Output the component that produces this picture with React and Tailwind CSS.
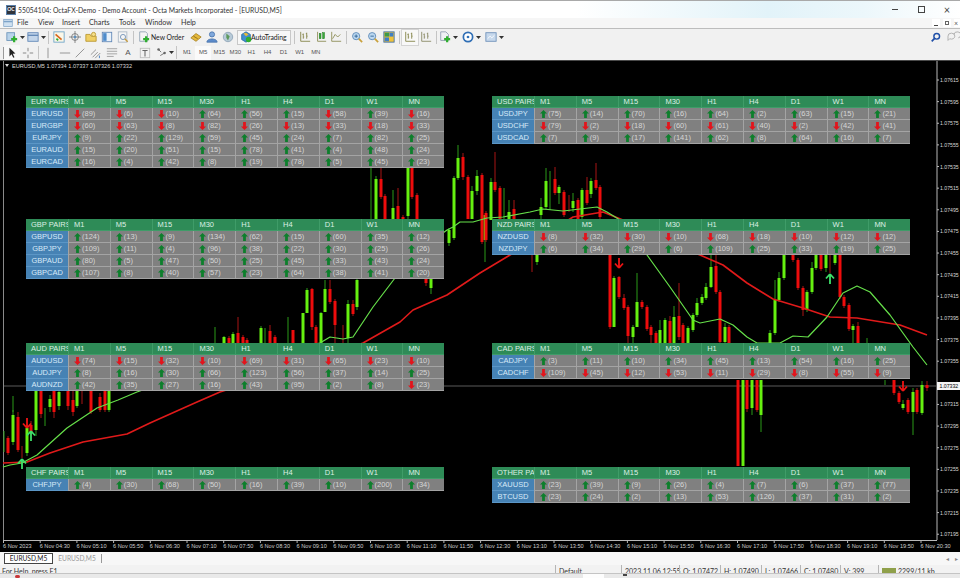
import React from "react";

const UI = "font-['Lato','Liberation_Sans',sans-serif]";

// [name, values] -- a negative value is a red down arrow
const panels = [
  { title: "EUR PAIRS", rows: [
    ["EURUSD", [-89, -6, -10, 64, 56, 15, -58, 39, -16]],
    ["EURGBP", [-60, -63, -8, -82, -26, -13, -33, -18, -33]],
    ["EURJPY", [9, 22, 129, 59, 45, 24, 7, 82, 25]],
    ["EURAUD", [15, 20, 51, 15, 78, 41, 4, 48, 24]],
    ["EURCAD", [16, 4, 42, 8, 19, 78, 5, 45, 23]],
  ] },
  { title: "USD PAIRS", rows: [
    ["USDJPY", [75, 14, 70, 16, 64, 2, 63, 15, 21]],
    ["USDCHF", [-79, -2, -18, -60, -61, -40, -2, -42, -41]],
    ["USDCAD", [7, 9, 17, 141, 62, 8, 64, 16, 7]],
  ] },
  { title: "GBP PAIRS", rows: [
    ["GBPUSD", [124, 13, 9, 134, 62, 15, 60, 35, 12]],
    ["GBPJPY", [109, 11, 4, 96, 38, 22, 30, 25, 26]],
    ["GBPAUD", [80, 5, 47, 50, 25, 45, 33, 43, 24]],
    ["GBPCAD", [107, 8, 40, 57, 23, 64, 38, 41, 20]],
  ] },
  { title: "NZD PAIRS", rows: [
    ["NZDUSD", [-8, -32, -30, -10, -68, -18, -10, -12, -12]],
    ["NZDJPY", [6, 34, 29, 6, 109, 25, 33, 19, 25]],
  ] },
  { title: "AUD PAIRS", rows: [
    ["AUDUSD", [-74, -15, -32, -10, -69, -31, -65, -23, -10]],
    ["AUDJPY", [8, 16, 30, 66, 123, 56, 37, 14, 25]],
    ["AUDNZD", [42, 35, 27, 16, 43, 95, 2, 8, -23]],
  ] },
  { title: "CAD PAIRS", rows: [
    ["CADJPY", [3, 11, 10, 34, 45, 13, 54, 16, 25]],
    ["CADCHF", [-109, -45, -12, -53, -11, -29, -8, -55, -9]],
  ] },
  { title: "CHF PAIRS", rows: [["CHFJPY", [4, 30, 68, 50, 16, 39, 10, 200, 34]]] },
  { title: "OTHER PAIRS", rows: [
    ["XAUUSD", [23, 39, 9, 26, 4, 7, 6, 37, 77]],
    ["BTCUSD", [23, 24, 2, 13, 53, 126, 37, 31, 2]],
  ] },
];

const timeframes = ["M1", "M5", "M15", "M30", "H1", "H4", "D1", "W1", "MN"];

// [x, body top, body bottom, wick top, wick bottom]
const green = [
  [13, 415, 442, 410, 445], [27, 428, 453, 425, 456], [36, 391, 430, 390, 436], [50, 399, 407, 395, 412],
  [59, 392, 406, 391, 410], [77, 391, 406, 391, 408], [109, 391, 410, 391, 412], [45, 410, 410, 408, 426],
  [13, 396, 396, 396, 412], [4, 431, 431, 431, 452],
  [215, 343, 343, 327, 343], [224, 337, 343, 336, 343], [233, 334, 343, 332, 343], [261, 328, 343, 326, 343],
  [265, 330, 330, 328, 343], [288, 343, 343, 317, 343], [303, 313, 343, 313, 343], [307, 290, 313, 288, 313],
  [321, 313, 343, 312, 343], [325, 289, 312, 280, 312], [348, 304, 338, 300, 343], [357, 280, 307, 279, 310],
  [376, 179, 219, 176, 219], [371, 170, 170, 168, 219], [393, 208, 219, 190, 219], [408, 167, 216, 167, 219],
  [454, 178, 238, 176, 240], [449, 230, 243, 228, 246], [458, 158, 178, 145, 180], [472, 191, 219, 186, 219],
  [477, 176, 191, 170, 195], [491, 182, 220, 178, 220], [485, 215, 240, 215, 262], [431, 278, 288, 278, 294],
  [504, 190, 190, 188, 219], [509, 212, 219, 200, 219], [541, 207, 215, 198, 219], [546, 181, 207, 168, 210],
  [550, 172, 172, 171, 210], [559, 187, 193, 185, 204], [573, 201, 208, 193, 212], [582, 190, 217, 188, 219],
  [591, 181, 194, 178, 198], [537, 255, 262, 255, 265],
  [614, 278, 327, 276, 327], [633, 327, 337, 325, 343], [637, 302, 327, 273, 327], [660, 330, 343, 320, 343],
  [665, 320, 343, 318, 343], [674, 317, 343, 306, 343], [688, 328, 343, 326, 343], [693, 315, 330, 313, 332],
  [697, 303, 315, 298, 317], [702, 297, 303, 294, 305], [706, 287, 298, 283, 300], [711, 267, 287, 255, 288],
  [725, 327, 342, 323, 343], [770, 333, 343, 330, 343], [775, 300, 333, 280, 335], [779, 278, 300, 272, 302],
  [784, 255, 278, 255, 280], [807, 292, 310, 290, 312], [812, 268, 292, 262, 294], [816, 255, 268, 255, 270],
  [826, 255, 268, 255, 272], [835, 255, 263, 255, 265], [853, 326, 330, 324, 343], [867, 343, 343, 338, 343],
  [743, 380, 466, 380, 466], [752, 380, 408, 380, 415], [761, 380, 415, 380, 432],
  [885, 380, 380, 380, 385], [903, 404, 408, 400, 410], [913, 392, 412, 388, 435], [922, 385, 413, 381, 415],
];
const red = [
  [18, 417, 450, 412, 452], [31, 425, 432, 421, 436], [22, 447, 447, 446, 458], [8, 438, 453, 436, 455],
  [41, 391, 414, 391, 418], [54, 391, 412, 391, 418], [68, 391, 406, 391, 410], [73, 400, 412, 391, 416],
  [91, 391, 412, 391, 414], [100, 397, 410, 393, 412], [105, 391, 410, 391, 412], [82, 391, 391, 391, 404],
  [229, 338, 343, 336, 343], [238, 333, 343, 317, 343], [243, 337, 343, 335, 343], [247, 340, 343, 338, 343],
  [270, 331, 343, 325, 343], [275, 337, 343, 335, 343], [293, 330, 343, 330, 343],
  [312, 289, 327, 288, 330], [316, 327, 343, 325, 343], [330, 289, 302, 280, 304], [335, 301, 325, 299, 343],
  [343, 325, 325, 325, 343], [353, 304, 314, 300, 316],
  [381, 179, 197, 168, 199], [385, 196, 219, 194, 219], [398, 206, 219, 188, 219], [403, 217, 219, 215, 219],
  [412, 167, 197, 167, 199], [417, 195, 219, 193, 219],
  [463, 157, 177, 153, 180], [468, 177, 219, 175, 219], [482, 175, 242, 173, 244], [486, 213, 240, 211, 242],
  [495, 182, 190, 152, 192], [500, 188, 220, 186, 220], [514, 209, 219, 200, 219], [555, 179, 193, 167, 195],
  [564, 192, 215, 190, 217], [569, 197, 197, 195, 212], [578, 200, 219, 198, 219], [587, 190, 203, 177, 205],
  [596, 180, 188, 163, 190], [600, 187, 217, 185, 219], [426, 278, 283, 278, 286], [532, 255, 255, 255, 272],
  [610, 255, 327, 255, 329], [619, 277, 297, 276, 299], [624, 298, 308, 294, 310], [628, 307, 336, 305, 343],
  [642, 302, 307, 300, 309], [647, 307, 329, 305, 331], [651, 327, 335, 325, 343], [656, 333, 343, 331, 343],
  [670, 321, 343, 316, 343], [679, 316, 337, 283, 340], [683, 325, 343, 323, 343], [716, 266, 292, 255, 294],
  [720, 292, 342, 290, 343], [729, 327, 343, 325, 343],
  [793, 255, 260, 255, 262], [798, 260, 288, 258, 290], [803, 288, 310, 286, 316], [821, 255, 269, 255, 271],
  [830, 255, 255, 255, 273], [840, 255, 297, 255, 299], [844, 297, 306, 295, 308], [849, 305, 329, 303, 331],
  [858, 326, 343, 322, 343],
  [738, 380, 466, 380, 466], [747, 380, 409, 380, 412], [757, 380, 410, 380, 412],
  [894, 380, 393, 380, 395], [899, 393, 402, 391, 404], [908, 400, 412, 398, 414], [917, 390, 412, 388, 414],
  [927, 385, 388, 381, 391],
];

const redMa = "3,463 27,462 50,453 83,442 127,434 150,423 197,402 220,392 290,370 363,343 400,322 413,310 447,295 480,273 510,255 540,238 573,217 603,212 623,220 660,240 700,255 723,265 747,283 773,299 803,308 830,317 857,318 900,325 927,335";
const greenMa = "3,467 10,465 22,463 37,455 67,428 97,408 118,400 137,392 200,370 280,350 320,343 330,337 343,339 353,337 373,307 395,278 420,250 447,230 453,227 460,222 473,222 487,218 503,217 530,212 543,209 563,211 597,207 607,212 620,220 647,255 670,287 693,320 700,323 720,319 733,325 747,337 757,343 780,343 793,336 808,337 827,317 843,293 857,286 870,292 890,315 913,347 927,365";

const prices = ["1.07615", "1.07595", "1.07575", "1.07555", "1.07535", "1.07515", "1.07495", "1.07475", "1.07455", "1.07435", "1.07415", "1.07395", "1.07375", "1.07355", "1.07335", "1.07315", "1.07295", "1.07275", "1.07255", "1.07235", "1.07215", "1.07195"];
const times = ["6 Nov 2023", "6 Nov 04:30", "6 Nov 05:10", "6 Nov 05:50", "6 Nov 06:30", "6 Nov 07:10", "6 Nov 07:50", "6 Nov 08:30", "6 Nov 09:10", "6 Nov 09:50", "6 Nov 10:30", "6 Nov 11:10", "6 Nov 11:50", "6 Nov 12:30", "6 Nov 13:10", "6 Nov 13:50", "6 Nov 14:30", "6 Nov 15:10", "6 Nov 15:50", "6 Nov 16:30", "6 Nov 17:10", "6 Nov 17:50", "6 Nov 18:30", "6 Nov 19:10", "6 Nov 19:50", "6 Nov 20:30"];

function Candles({ list, body, wick }) {
  return list.map(([x, top, bottom, wickTop, wickBottom], i) => (
    <g key={i}>
      <line x1={x} x2={x} y1={wickTop} y2={wickBottom} stroke={wick} strokeWidth="1" />
      {bottom > top && <rect x={x - 1.5} y={top} width="3" height={bottom - top} fill={body} />}
    </g>
  ));
}

function ChartArrow({ x, y, up, color }) {
  const d = up
    ? `M${x} ${y}l-4 4.5M${x} ${y}l4 4.5M${x} ${y}v10`
    : `M${x} ${y}l-4 -4.5M${x} ${y}l4 -4.5M${x} ${y}v-10`;
  return <path d={d} fill="none" stroke={color} strokeWidth="1.8" />;
}

function Chart() {
  return (
    <svg viewBox="0 60 960 492" className="absolute inset-0 w-[960px] h-[492px] font-['Liberation_Sans',sans-serif]">
      <line x1="3.5" x2="3.5" y1="61" y2="540" stroke="#8a8a8a" />
      <line x1="0" x2="960" y1="60.5" y2="60.5" stroke="#4a4a4a" />
      <line x1="937" x2="937" y1="61" y2="540" stroke="#b8b8b8" />
      <line x1="3" x2="937" y1="540.5" y2="540.5" stroke="#b8b8b8" />
      <line x1="4" x2="937" y1="386" y2="386" stroke="#5a5a5a" />
      <Candles list={green} body="#66f010" wick="#2a9a18" />
      <Candles list={red} body="#ee0c0c" wick="#a81414" />
      <polyline points={redMa} fill="none" stroke="#e01a1a" strokeWidth="1.6" strokeLinejoin="round" />
      <polyline points={greenMa} fill="none" stroke="#66e04a" strokeWidth="1.2" strokeLinejoin="round" />
      <ChartArrow x={22} y={459} up color="#3ee06a" />
      <ChartArrow x={31} y={431} up color="#3ee06a" />
      <ChartArrow x={27} y={428} color="#ee1414" />
      <ChartArrow x={830} y={274} up color="#3ee06a" />
      <ChartArrow x={619} y={268} color="#ee1414" />
      <ChartArrow x={903} y={391} color="#ee1414" />
      <polygon points="5,64 9,64 7,67" fill="#d8d8d8" />
      <text x="12" y="68" fontSize="5.6" fill="#d8d8d8">EURUSD,M5  1.07334 1.07337 1.07326 1.07332</text>
      {prices.map((p, i) => (
        <g key={p}>
          <line x1="937" x2="939" y1={80 + i * 21.63} y2={80 + i * 21.63} stroke="#b8b8b8" />
          {p !== "1.07335" && <text x="940" y={82 + i * 21.63} fontSize="5.2" fill="#d8d8d8">{p}</text>}
        </g>
      ))}
      {times.map((t, i) => (
        <g key={t}>
          <line x1={3.5 + i * 36.7} x2={3.5 + i * 36.7} y1="541" y2="543" stroke="#b8b8b8" />
          <text x={3 + i * 36.7} y="547.5" fontSize="5.6" fill="#cfcfcf">{t}</text>
        </g>
      ))}
      <rect x="937" y="382" width="23" height="8" fill="#f4f4f4" />
      <text x="939.5" y="388" fontSize="5.2" fill="#000">1.07332</text>
    </svg>
  );
}

function Arrow({ up }) {
  return (
    <svg viewBox="0 0 7 8" className="w-[7px] h-[8px] shrink-0">
      {up ? (
        <polygon points="3.5,0 7,3.6 4.9,3.6 4.9,8 2.1,8 2.1,3.6 0,3.6" fill="#0d7f2c" />
      ) : (
        <polygon points="3.5,8 7,4.4 4.9,4.4 4.9,0 2.1,0 2.1,4.4 0,4.4" fill="#e2141c" />
      )}
    </svg>
  );
}

function Panel({ title, rows }) {
  return (
    <div className="grid grid-cols-[42px_repeat(9,41.8px)] auto-rows-[12px] text-[7.5px] leading-none font-['Liberation_Sans',sans-serif] self-start">
      <div className="bg-[#2e8b57] text-[#dcefe4] pl-[5px] flex items-center overflow-hidden whitespace-nowrap border-b border-[#3f9c68]">
        {title}
      </div>
      {timeframes.map((tf) => (
        <div key={tf} className="bg-[#2e8b57] text-[#dcefe4] pl-[5px] flex items-center border-b border-l border-[#3f9c68]">
          {tf}
        </div>
      ))}
      {rows.map(([name, values]) => (
        <React.Fragment key={name}>
          <div className="bg-[#4682b4] text-[#d6e9f8] flex items-center justify-center border-b border-[#5b96c6]">
            {name}
          </div>
          {values.map((v, i) => (
            <div key={i} className="bg-[#808080] text-[#d6d6d6] pl-[5px] flex items-center gap-[1px] border-b border-l border-[#a4a4a4]">
              <Arrow up={v > 0} />
              <span>({Math.abs(v)})</span>
            </div>
          ))}
        </React.Fragment>
      ))}
    </div>
  );
}

function Sep() {
  return <div className="w-px h-[13px] bg-[#c4c4c4] mx-[2px] shrink-0" />;
}

function Caret({ className = "" }) {
  return (
    <svg viewBox="0 0 5 3" className={"w-[5px] h-[3px] shrink-0 " + className}>
      <polygon points="0,0 5,0 2.5,3" fill="#333" />
    </svg>
  );
}

// small 14x14 toolbar drawings
function Ico({ children, className = "" }) {
  return (
    <div className={"w-[16px] h-[15px] flex items-center justify-center shrink-0 " + className}>
      <svg viewBox="0 0 14 14" className="w-[12px] h-[12px]" fill="none">{children}</svg>
    </div>
  );
}

const Plus = () => <path d="M9.5 6v7M6 9.5h7" stroke="#2fae2f" strokeWidth="2.6" />;
const Bars = ({ c = "#8a8a52" }) => (
  <path d="M2 1v11h11M5 3v6M4 4h1M5 7h1M9 2v7M8 3h1M9 6h1" stroke={c} strokeWidth="1.1" />
);

function ToolRow1() {
  return (
    <div className="flex items-center h-[16px] pl-[4px] text-[6.8px] text-[#222]">
      <Ico><rect x="1" y="2" width="9" height="9" fill="#b9d3ea" stroke="#6b93b8" /><Plus /></Ico>
      <Caret />
      <Ico><rect x="1" y="2" width="12" height="10" fill="#c3d5ea" stroke="#5f85b5" /><path d="M1 5h12" stroke="#5f85b5" strokeWidth="1.5" /></Ico>
      <Caret />
      <Sep />
      <Ico><rect x="1" y="1" width="12" height="12" fill="#fbf7e8" stroke="#6aa2c8" /><path d="M3 4l7 6" stroke="#d9681e" strokeWidth="2" /><path d="M4 9l2 2" stroke="#2fae2f" strokeWidth="2" /></Ico>
      <Ico><circle cx="7" cy="7" r="4" stroke="#777" /><path d="M7 0v14M0 7h14" stroke="#777" /><circle cx="7" cy="7" r="1.6" fill="#5a8fc0" /></Ico>
      <Ico><path d="M1 4h5l1 2h6v6H1z" fill="#f0cf63" stroke="#b9962f" /><circle cx="10" cy="4" r="2.4" fill="#f5df8a" stroke="#b9962f" /></Ico>
      <Ico><rect x="1.5" y="1.5" width="11" height="11" fill="#e8f1fa" stroke="#5f85b5" /><rect x="2.5" y="2.5" width="4" height="9" fill="#4f8ccb" /></Ico>
      <Ico><rect x="1.5" y="1" width="10" height="12" fill="#f4f4f4" stroke="#a9b6c4" /><circle cx="7" cy="7" r="3" stroke="#6d8fb5" /><path d="M9 9l3.5 3.5" stroke="#c79a3a" strokeWidth="1.5" /></Ico>
      <Sep />
      <Ico><path d="M2 1h7l2 2v9H2z" fill="#f4f4f4" stroke="#8ea0b2" /><Plus /></Ico>
      <span className="-ml-[1px] w-[37px] whitespace-nowrap">New Order</span>
      <Ico><path d="M1 8l6-5 6 4-6 5z" fill="#e6b93a" stroke="#a9842a" /><path d="M4 6l5 3" stroke="#8a6a1e" /></Ico>
      <Ico><circle cx="7" cy="4" r="3" fill="#7fa8dc" stroke="#4d77ae" /><path d="M1 13c0-5 12-5 12 0z" fill="#5b8bcb" stroke="#4d77ae" /></Ico>
      <Ico><circle cx="7" cy="7" r="5.5" fill="#b8cad8" stroke="#8ea4b6" /><path d="M5 3l4 3-2 5-2-3z" fill="#5d9a5d" /></Ico>
      <div className="flex items-center w-[54px] h-[15px] ml-px border border-[#c8c8c8] bg-[#f7f7f7] shrink-0">
        <Ico><path d="M7 1l5 3v6l-5 3-5-3V4z" fill="#3f8fd0" stroke="#2a6ca4" /><path d="M4 3l3-1 3 2-3 2z" fill="#e5b93a" /><circle cx="10" cy="10" r="3.2" fill="#2fae2f" /></Ico>
        <span className="-ml-[3px] whitespace-nowrap">AutoTrading</span>
      </div>
      <div className="w-px" />
      <Sep />
      <Ico><Bars /></Ico>
      <Ico><path d="M3 1v11h10" stroke="#8a8a52" /><rect x="5" y="3" width="2" height="6" fill="#3aa83a" stroke="#1d7a1d" strokeWidth=".6" /><rect x="9" y="2" width="2" height="7" fill="#3aa83a" stroke="#1d7a1d" strokeWidth=".6" /></Ico>
      <Ico className="-ml-[1px]"><path d="M2 1v11h11M3 9l3-5 3 3 3-3" stroke="#8a8a52" /></Ico>
      <Sep />
      <Ico><circle cx="6" cy="6" r="4.2" fill="#bcd8f0" stroke="#5a86b4" /><path d="M4 6h4M6 4v4" stroke="#2a5f94" /><path d="M9 9l4 4" stroke="#c9a13c" strokeWidth="2" /></Ico>
      <Ico><circle cx="6" cy="6" r="4.2" fill="#bcd8f0" stroke="#5a86b4" /><path d="M4 6h4" stroke="#2a5f94" /><path d="M9 9l4 4" stroke="#c9a13c" strokeWidth="2" /></Ico>
      <Ico><rect x="1" y="1" width="12" height="12" fill="#f0c23a" stroke="#3f6fa8" /><rect x="2" y="2" width="5" height="4.5" fill="#3c9a4a" /><rect x="7.5" y="2" width="4.5" height="4.5" fill="#3f7fc4" /><rect x="2" y="7.5" width="5" height="4.5" fill="#3f7fc4" /></Ico>
      <Sep />
      <Ico className="bg-[#f8f8f8] outline outline-1 outline-[#d4d4d4]"><Bars /></Ico>
      <Ico><Bars c="#8f8f6c" /></Ico>
      <Sep />
      <Ico className="-ml-[2px]"><path d="M2 1h6l3 3v7H2z" fill="#eef0f4" stroke="#8d9bb0" /><Plus /></Ico>
      <Caret />
      <div className="w-[2px]" />
      <Ico><circle cx="7" cy="7" r="5.4" fill="#fff" stroke="#2f6eb5" strokeWidth="2" /><circle cx="7" cy="7" r="1.6" fill="#2f6eb5" /></Ico>
      <Caret />
      <div className="w-[2px]" />
      <Ico><rect x="1" y="2" width="12" height="10" fill="#c6d8ec" stroke="#6c8fb8" /><path d="M3 9l3-3 2 2 3-3" stroke="#fff" /></Ico>
      <Caret />
      <div className="ml-auto flex items-center gap-[4px] mr-[-3px]">
        <svg viewBox="0 0 14 14" className="w-[10px] h-[10px]" fill="none"><circle cx="8" cy="6" r="4" stroke="#1f4fa8" strokeWidth="2" /><path d="M5 9l-4 4" stroke="#1f4fa8" strokeWidth="2.4" /></svg>
        <svg viewBox="0 0 18 14" className="w-[18px] h-[12px]" fill="none"><path d="M2 6a4 3.5 0 0 1 8 0a4 3.5 0 0 1-6 3l-2 2z" stroke="#a8a8a8" /><path d="M9 4a4 3.5 0 0 1 8 1a4 3.5 0 0 1-3 3" stroke="#a8a8a8" /></svg>
      </div>
    </div>
  );
}

function ToolRow2() {
  return (
    <div className="flex items-center h-[15px] pl-[3px] text-[6px] text-[#555] font-['Liberation_Sans',sans-serif]">
      <div className="w-[2px] h-[12px] border-l border-[#999] shrink-0" />
      <Ico className="-ml-[1px] bg-[#f8f8f8]"><path d="M4 1v10l2.5-2.4 2 4 1.4-.7-2-3.9 3.1-.3z" fill="#222" /></Ico>
      <Ico><path d="M7 1v4M7 9v4M1 7h4M9 7h4" stroke="#777" /></Ico>
      <Sep />
      <Ico className="-ml-[1px]"><path d="M7 1v12" stroke="#888" /></Ico>
      <Ico className="ml-px"><path d="M1 7h12" stroke="#888" /></Ico>
      <Ico className="-ml-[1px]"><path d="M2 12L12 2" stroke="#888" /></Ico>
      <Ico><path d="M1 9l6-6M3 12l6-6M6 13l6-6" stroke="#888" /><path d="M11 10v3" stroke="#3a78c0" /></Ico>
      <Ico><path d="M1 2h12M1 5h12M1 8h12M1 11h8" stroke="#9a9a9a" /></Ico>
      <div className="w-[16px] text-center text-[8px] text-[#555] shrink-0">A</div>
      <Ico className="ml-px"><rect x="1.5" y="1.5" width="11" height="11" stroke="#bbb" /><path d="M4 4h6M7 4v7" stroke="#666" strokeWidth="1.2" /></Ico>
      <Ico className="ml-px"><path d="M3 3l3 3M5 10l5-3" stroke="#666" /><circle cx="3" cy="3" r="1.5" fill="#666" /><circle cx="10" cy="7" r="1.5" fill="#666" /></Ico>
      <Caret className="-ml-[1px]" />
      <Sep />
      <div className="flex">
        {timeframes.map((tf) => (
          <div key={tf} className={"w-[16.1px] h-[14px] flex items-center justify-center " + (tf === "M5" ? "bg-[#fafafa]" : "")}>
            {tf}
          </div>
        ))}
      </div>
    </div>
  );
}

function Menu() {
  const items = ["File", "View", "Insert", "Charts", "Tools", "Window", "Help"];
  const widths = ["w-[21px]", "w-[24px]", "w-[27px]", "w-[30px]", "w-[26px]", "w-[36px]", "w-[24px]"];
  return (
    <div className={"flex items-center h-[10px] bg-[#f6f6f6] border-b border-[#bdbdbd] text-[7.2px] text-[#333] box-content " + UI}>
      <svg viewBox="0 0 14 14" className="w-[10px] h-[10px] ml-[3px] mr-[4px]" fill="none">
        <rect x="1" y="2" width="12" height="10" fill="#cfe0f0" stroke="#7da3c8" />
        <path d="M1 5h12" stroke="#7da3c8" strokeWidth="2" />
      </svg>
      {items.map((m, i) => (
        <div key={m} className={widths[i] + " whitespace-nowrap"}>{m}</div>
      ))}
      <div className="ml-auto flex items-center gap-[3px] text-[#555]">
        <div className="w-[8px] h-[8px] bg-white flex items-end justify-center"><div className="w-[4px] h-px bg-[#444] mb-[1px]" /></div>
        <div className="w-[8px] h-[8px] bg-white flex items-center justify-center"><div className="w-[4px] h-[4px] border border-[#666]" /></div>
        <div className="w-[6px] h-[8px] bg-white flex items-center text-[7px] leading-none">×</div>
      </div>
    </div>
  );
}

function TitleBar() {
  return (
    <div className={"flex items-center h-[19px] bg-[linear-gradient(90deg,#ffffff_0%,#ffffff_60%,#e2f3f9_80%,#ecf7fb_90%,#ffffff_100%)] border-t border-[#a9a9a9] text-[6.8px] text-[#333] " + UI}>
      <div className="w-[10px] h-[10px] ml-[6px] bg-[#30343c] border border-[#5a7fa8] flex items-center justify-center text-[5px] text-white font-bold leading-none">OC</div>
      <div className="ml-[2px] whitespace-nowrap">55054104: OctaFX-Demo - Demo Account - Octa Markets Incorporated - [EURUSD,M5]</div>
      <div className="ml-auto flex items-center">
        <div className="w-[26px] flex justify-center"><div className="w-[6px] h-px bg-[#444]" /></div>
        <div className="w-[26px] flex justify-center"><div className="w-[7px] h-[7px] border border-[#444]" /></div>
        <div className="w-[26px] flex justify-center text-[11px] leading-none text-[#444]">×</div>
      </div>
    </div>
  );
}

function Status() {
  const cells = [
    ["w-[555px] pl-[2px]", "For Help, press F1"],
    ["w-[66px]", "Default"],
    ["w-[58px]", "2023.11.06 12:55"],
    ["w-[41px]", "O: 1.07472"],
    ["w-[41px]", "H: 1.07490"],
    ["w-[39px]", "L: 1.07466"],
    ["w-[40px]", "C: 1.07480"],
    ["w-[38px]", "V: 399"],
  ];
  return (
    <div className={"flex h-[8px] overflow-hidden bg-[#f2f2f2] text-[7px] leading-[12px] text-[#333] " + UI}>
      {cells.map(([w, t], i) => (
        <div key={t} className={w + " shrink-0 whitespace-nowrap " + (i ? "pl-[3px] border-l border-[#b5b5b5]" : "")}>{t}</div>
      ))}
      <div className="pl-[3px] border-l border-[#b5b5b5] flex items-start gap-[2px] whitespace-nowrap">
        <div className="w-[14px] h-[8px] mt-[3px] bg-[#8fa04a]" />
        <span>2299/11 kb</span>
      </div>
    </div>
  );
}

export default function App() {
  return (
    <div className="w-[960px] h-[578px] flex flex-col overflow-hidden bg-[#f0f0f0]">
      <TitleBar />
      <Menu />
      <div className={"bg-[#f1f1f1] " + UI}>
        <ToolRow1 />
        <ToolRow2 />
      </div>

      <div className="relative h-[492px] bg-black shrink-0">
        <Chart />
        {/* indicator tables float over the chart */}
        <div className="absolute left-[26px] top-[36px] grid grid-cols-[418px_419px] grid-rows-[123px_124px_124px_auto] gap-x-[48px]">
          {panels.map((p) => (
            <Panel key={p.title} title={p.title} rows={p.rows} />
          ))}
        </div>
      </div>

      <div className={"flex items-center h-[13px] bg-[#f7f7f7] text-[6.6px] shrink-0 " + UI}>
        <div className="ml-[4px] h-[11px] w-[49px] bg-white border border-[#444] flex items-center justify-center text-[#222]">EURUSD,M5</div>
        <div className="w-[48px] text-center text-[#999]">EURUSD,M5</div>
        <div className="w-px h-[9px] bg-[#999]" />
        <div className="ml-auto flex gap-[6px] pr-[2px] text-[#888] text-[6px]"><span>◂</span><span>▸</span></div>
      </div>
      <Status />
      <div className="h-[5px] bg-[#e9e9e9] border-t border-[#c4c4c4] flex shrink-0">
        <div className="ml-[15px] w-[5px] h-[3px] mt-[1px] rounded-full bg-[#c9383a]" />
        <div className="ml-[563px] w-[21px] bg-[#fdfdfd]" />
        <div className="ml-[19px] w-[4px] h-[2px] bg-[#444]" />
      </div>
    </div>
  );
}
